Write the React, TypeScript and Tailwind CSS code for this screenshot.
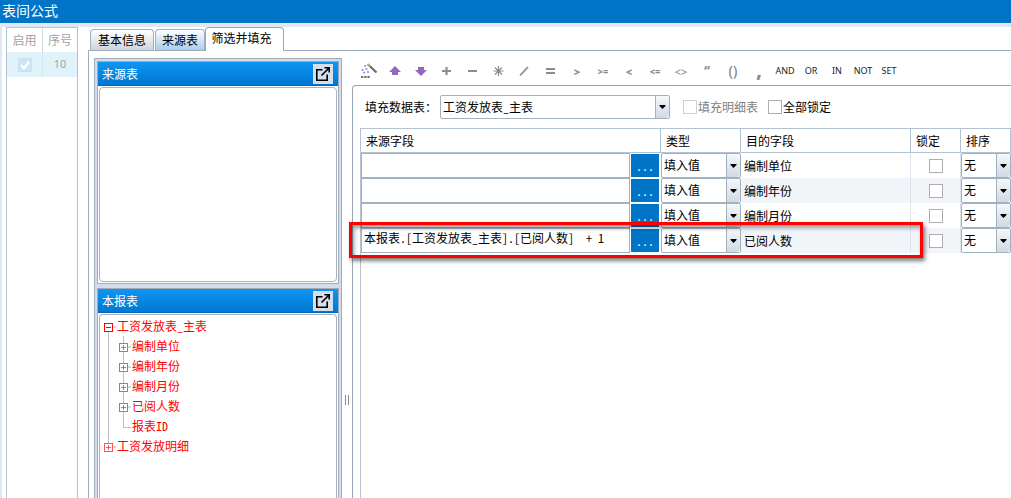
import React from "react";

const operators = [
  { text: ">", style: "text-[11px] font-extrabold" },
  { text: ">=", style: "text-[9px] font-extrabold" },
  { text: "<", style: "text-[11px] font-extrabold" },
  { text: "<=", style: "text-[9px] font-extrabold" },
  { text: "<>", style: "text-[11px] font-semibold" },
  { text: "‘’", style: "text-[14px] font-bold" },
  { text: "()", style: "text-[14px] font-semibold" },
  { text: ",", style: "text-[18px] font-extrabold" },
];
const keywords = ["AND", "OR", "IN", "NOT", "SET"];

const rows = [
  { source: "", target: "编制单位" },
  { source: "", target: "编制年份" },
  { source: "", target: "编制月份" },
  { source: "本报表.[工资发放表_主表].[已阅人数]  + 1", target: "已阅人数" },
];

const treeFields = ["编制单位", "编制年份", "编制月份", "已阅人数"];

const toolIcons = [
  {
    name: "向导",
    icon: (
      <>
        <path d="M7 1.5l8.5 8" stroke="#6b6b6b" strokeWidth="2" />
        <path d="M6.5 1l2.5 2.5" stroke="#b5a878" strokeWidth="1.8" />
        <g fill="#8795dd">
          <circle cx="4" cy="3" r="1.1" />
          <circle cx="1.5" cy="7" r="1.1" />
          <circle cx="5.5" cy="6" r="1.1" />
          <circle cx="7" cy="9" r="1.1" />
          <circle cx="3" cy="9.5" r="1.1" />
        </g>
        <path d="M0 14h2.4M3.2 14h2.4M6.4 14h2.4" stroke="#777" strokeWidth="2" />
      </>
    ),
  },
  { name: "上移", icon: <path d="M8 3l6 6h-3v3H5V9H2z" fill="#9467bd" /> },
  { name: "下移", icon: <path d="M8 13l6-6h-3V4H5v3H2z" fill="#9467bd" /> },
  { name: "加", icon: <path d="M3 8h9M7.5 4v8" stroke="#8c8c8c" strokeWidth="2.2" /> },
  { name: "减", icon: <path d="M3 8h9" stroke="#8c8c8c" strokeWidth="2" /> },
  {
    name: "乘",
    icon: <path d="M7.5 3v10M2.5 8h10M4 4.5l7 7M11 4.5l-7 7" stroke="#8c8c8c" strokeWidth="1.2" />,
  },
  { name: "除", icon: <path d="M3 12.5l8-8.5" stroke="#8c8c8c" strokeWidth="1.8" /> },
  { name: "等于", icon: <path d="M3 6h9M3 10h9" stroke="#8c8c8c" strokeWidth="2" /> },
];

const Arrow = () => (
  <span className="pointer-events-none absolute inset-y-px right-px flex w-3.5 items-center justify-center rounded-r-sm border-l border-[#a3b0bd] bg-linear-to-b from-[#f6f8fa] to-[#cfd9e5]">
    <svg width="7" height="4" viewBox="0 0 7 4">
      <path d="M0.5 0h6v1L3.5 4L0.5 1z" fill="#000" />
    </svg>
  </span>
);

type SelectProps = { label?: string; id?: string; value: string; className: string };

const Select = ({ label, id, value, className }: SelectProps) => (
  <div className={`relative ${className}`}>
    <select
      id={id}
      aria-label={label}
      className="block h-full w-full appearance-none rounded-xs border border-[#a3b0bd] bg-white pr-4 pb-px pl-0.5 text-black"
    >
      <option>{value}</option>
    </select>
    <Arrow />
  </div>
);

const Checkbox = ({ label, disabled }: { label?: string; disabled?: boolean }) => (
  <input
    type="checkbox"
    aria-label={label}
    disabled={disabled}
    className="block size-3.5 appearance-none border border-[#adadad] bg-white disabled:border-[#d0d0d0]"
  />
);

type PanelProps = { title: string; className: string; bodyClass: string; children?: React.ReactNode };

const Panel = ({ title, className, bodyClass, children }: PanelProps) => (
  <section className={`flex flex-col border border-[#9fadbb] bg-white ${className}`}>
    <div className="flex h-6 shrink-0 items-center justify-between border-b border-[#0068b8] bg-linear-to-b from-[#1095f2] to-[#0078d0] pr-[5px] pl-1 text-white">
      <h2>{title}</h2>
      <button type="button" aria-label="弹出" className="size-5 bg-[#d5deea] text-black">
        <svg width="20" height="20" viewBox="0 0 20 20" fill="none" stroke="currentColor" strokeWidth="1.6">
          <path d="M9.5 5.8H3.8v10.4h10.4v-5.7" />
          <path d="M8.5 11.5L16 4M11.5 3.8h4.7v4.7" />
        </svg>
      </button>
    </div>
    <div className={`flex-1 border border-[#a9b3be] ${bodyClass}`}>{children}</div>
  </section>
);

type ToggleProps = { name: string; open?: boolean; color: string; line: string };

const Toggle = ({ name, open, color, line }: ToggleProps) => (
  <button type="button" aria-label={name} aria-expanded={!!open} className="h-5 w-4">
    <svg width="16" height="20" viewBox="0 0 16 20" fill="none" shapeRendering="crispEdges">
      <path d={line} stroke="#bfbfbf" />
      <path d="M13 11h3" stroke="#d8d8d8" strokeWidth="2" />
      <rect x="4.5" y="7.5" width="8" height="8" fill="#fff" stroke={color} />
      <path d={open ? "M6 11.5h5" : "M6 11.5h5M8.5 9v5"} stroke={color} />
    </svg>
  </button>
);

const Guide = () => (
  <svg width="15" height="20" viewBox="0 0 15 20" shapeRendering="crispEdges">
    <path d="M8.5 0v20" stroke="#bfbfbf" />
  </svg>
);

const FieldTree = () => (
  <ul className="pt-px text-[#f00]">
    <li>
      <div className="flex h-5 items-center">
        <Toggle name="工资发放表_主表" open color="#f00" line="M8.5 16v4" />
        <span className="pl-px">工资发放表_主表</span>
      </div>
      <ul>
        {treeFields.map((field) => (
          <li key={field} className="flex h-5 items-center">
            <Guide />
            <Toggle name={field} color="#f55" line="M8.5 0v20" />
            <span className="pl-px">{field}</span>
          </li>
        ))}
        <li className="flex h-5 items-center">
          <Guide />
          <svg width="16" height="20" viewBox="0 0 16 20" fill="none" shapeRendering="crispEdges">
            <path d="M8.5 0v11.5H16" stroke="#bfbfbf" />
          </svg>
          <span className="pl-px">报表ID</span>
        </li>
      </ul>
    </li>
    <li className="flex h-5 items-center">
      <Toggle name="工资发放明细" color="#f55" line="M8.5 0v8" />
      <span className="pl-px">工资发放明细</span>
    </li>
  </ul>
);

const FormulaList = () => (
  <div className="w-[72px] shrink-0 border border-b-0 border-[#b4c3d3] text-[#a3a3a3]">
    <table className="w-full table-fixed border-separate border-spacing-0">
      <thead>
        <tr className="h-6">
          <th className="w-9 border-r border-[#cfdae5] p-0 font-normal">启用</th>
          <th className="p-0 font-normal">序号</th>
        </tr>
      </thead>
      <tbody>
        <tr className="h-[25px] bg-[#e0f3fa]">
          <td className="border-r border-[#d2e8f1] p-0">
            <label className="relative mx-auto block size-3.5">
              <input
                type="checkbox"
                aria-label="启用"
                defaultChecked
                disabled
                className="block size-3.5 appearance-none border border-[#cfe0ec] bg-[#cde5f5]"
              />
              <svg className="absolute inset-0" width="14" height="14" viewBox="0 0 14 14" fill="none">
                <path d="M3 7l3 3.5L11 3.5" stroke="#fff" strokeWidth="2.2" />
              </svg>
            </label>
          </td>
          <td className="p-0 text-center font-['Noto_Sans'] text-[11px]">10</td>
        </tr>
      </tbody>
    </table>
  </div>
);

const Toolbar = () => (
  <div className="flex h-[34px] shrink-0 items-center pt-1.5 pl-1">
    {toolIcons.map(({ name, icon }) => (
      <button key={name} type="button" aria-label={name} className="flex h-5 w-[26px] items-center justify-center">
        <svg width="16" height="16" viewBox="0 0 16 16" fill="none">
          {icon}
        </svg>
      </button>
    ))}
    {operators.map(({ text, style }) => (
      <button
        key={text}
        type="button"
        className={`flex h-5 w-[26px] items-center justify-center font-['Open_Sans'] leading-none text-[#8c8c8c] ${style}`}
      >
        {text}
      </button>
    ))}
    {keywords.map((word) => (
      <button key={word} type="button" className="h-5 w-[26px] font-['Noto_Sans'] text-[9px] text-[#222]">
        {word}
      </button>
    ))}
  </div>
);

const MappingTable = () => (
  <div className="relative flex-1 border-t border-l border-[#b4c3d3]">
    <table className="w-full table-fixed border-separate border-spacing-0 text-left">
      <thead>
        <tr className="h-6 *:border-r *:border-b *:border-[#b4c3d3] *:p-0 *:pl-[5px] *:font-normal">
          <th className="w-[300px]">来源字段</th>
          <th className="w-20">类型</th>
          <th>目的字段</th>
          <th className="w-[50px]">锁定</th>
          <th className="w-[50px]">排序</th>
        </tr>
      </thead>
      <tbody>
        {rows.map(({ source, target }) => (
          <tr key={target} className="h-[25px] even:bg-[#f1f5f9] *:p-0">
            <td className="bg-white">
              <div className="flex items-center">
                <input
                  type="text"
                  aria-label={`${target}来源字段`}
                  defaultValue={source}
                  className="h-[25px] min-w-0 flex-1 border border-[#a3b0bd] bg-white px-0.5 pb-1.5"
                />
                <button type="button" className="mr-0.5 ml-px h-[23px] w-7 bg-[#0075c8] text-white">
                  ...
                </button>
              </div>
            </td>
            <td>
              <Select label={`${target}类型`} value="填入值" className="h-[25px]" />
            </td>
            <td className="border-r border-[#dbe4ed] pl-[3px]!">{target}</td>
            <td className="border-r border-[#dbe4ed]">
              <div className="flex justify-center">
                <Checkbox label={`${target}锁定`} />
              </div>
            </td>
            <td>
              <Select label={`${target}排序`} value="无" className="h-[25px]" />
            </td>
          </tr>
        ))}
      </tbody>
    </table>
    {/* highlight round the last mapping */}
    <div className="pointer-events-none absolute top-[93px] right-[88px] -left-3 h-9 border-3 border-[#f00] shadow-[2px_3px_4px_rgba(0,0,0,0.5),inset_2px_3px_4px_rgba(0,0,0,0.4)]" />
  </div>
);

const FillPanel = () => (
  <div className="flex min-w-0 flex-1 flex-col">
    <Toolbar />
    <div className="flex flex-1 flex-col rounded-tl border-t border-l border-[#98a7b5] pl-[7px]">
      <form className="flex h-[42px] shrink-0 items-center pl-[5px]">
        <label htmlFor="fill-table" className="w-[75px] shrink-0">
          填充数据表：
        </label>
        <Select id="fill-table" value="工资发放表_主表" className="h-6 w-[230px]" />
        <label className="ml-[13px] flex items-center gap-px text-[#808080]">
          <Checkbox disabled />
          填充明细表
        </label>
        <label className="ml-2.5 flex items-center gap-px">
          <Checkbox />
          全部锁定
        </label>
      </form>
      <MappingTable />
    </div>
  </div>
);

const Tabs = () => (
  <div role="tablist" className="z-10 flex h-6 shrink-0 items-end gap-px pl-0.5">
    <button
      role="tab"
      type="button"
      className="mb-px h-[21px] w-16 rounded-t border border-b-0 border-[#a3b0bd] bg-linear-to-b from-white to-[#cfd4dc]"
    >
      基本信息
    </button>
    <button
      role="tab"
      type="button"
      className="mb-px -mr-px h-[21px] w-[50px] rounded-t border border-b-0 border-[#a3b0bd] bg-linear-to-b from-white to-[#a9cdee]"
    >
      来源表
    </button>
    <button
      role="tab"
      type="button"
      aria-selected
      className="h-6 w-[79px] rounded-t border border-b-0 border-[#6fb7c9] bg-white pr-1.5 pb-1"
    >
      筛选并填充
    </button>
  </div>
);

export default function App() {
  return (
    <div className="flex h-screen flex-col overflow-hidden bg-[#e1e8f1] font-['Noto_Sans_Mono_CJK_SC','Noto_Sans_CJK_SC',sans-serif] text-xs text-black">
      <header className="flex h-[23px] shrink-0 items-center bg-[#0075c8] pb-1 pl-0.5 text-sm text-white">
        <h1>表间公式</h1>
      </header>
      <div className="mt-1 ml-0.5 flex min-h-0 flex-1 bg-white pl-1">
        <FormulaList />
        <main className="ml-2.5 flex min-w-0 flex-1 flex-col">
          <Tabs />
          <div className="-mt-px flex min-h-0 flex-1 border-t border-l border-[#9fadbb]">
            <aside className="mt-[7px] ml-[5px] flex w-[248px] shrink-0 flex-col gap-1 border border-b-0 border-[#9fadbb] bg-[#d3dce8] p-0.5 pb-0">
              <Panel title="来源表" className="h-[223px] shrink-0" bodyClass="m-px rounded-sm" />
              <Panel title="本报表" className="flex-1 border-b-0" bodyClass="mx-px mt-px rounded-t-sm border-b-0">
                <FieldTree />
              </Panel>
            </aside>
            <div className="w-2.5 shrink-0 pt-[344px]">
              <div className="mx-auto h-2.5 w-1 border-x border-[#8a8a8a]" />
            </div>
            <FillPanel />
          </div>
        </main>
      </div>
    </div>
  );
}
